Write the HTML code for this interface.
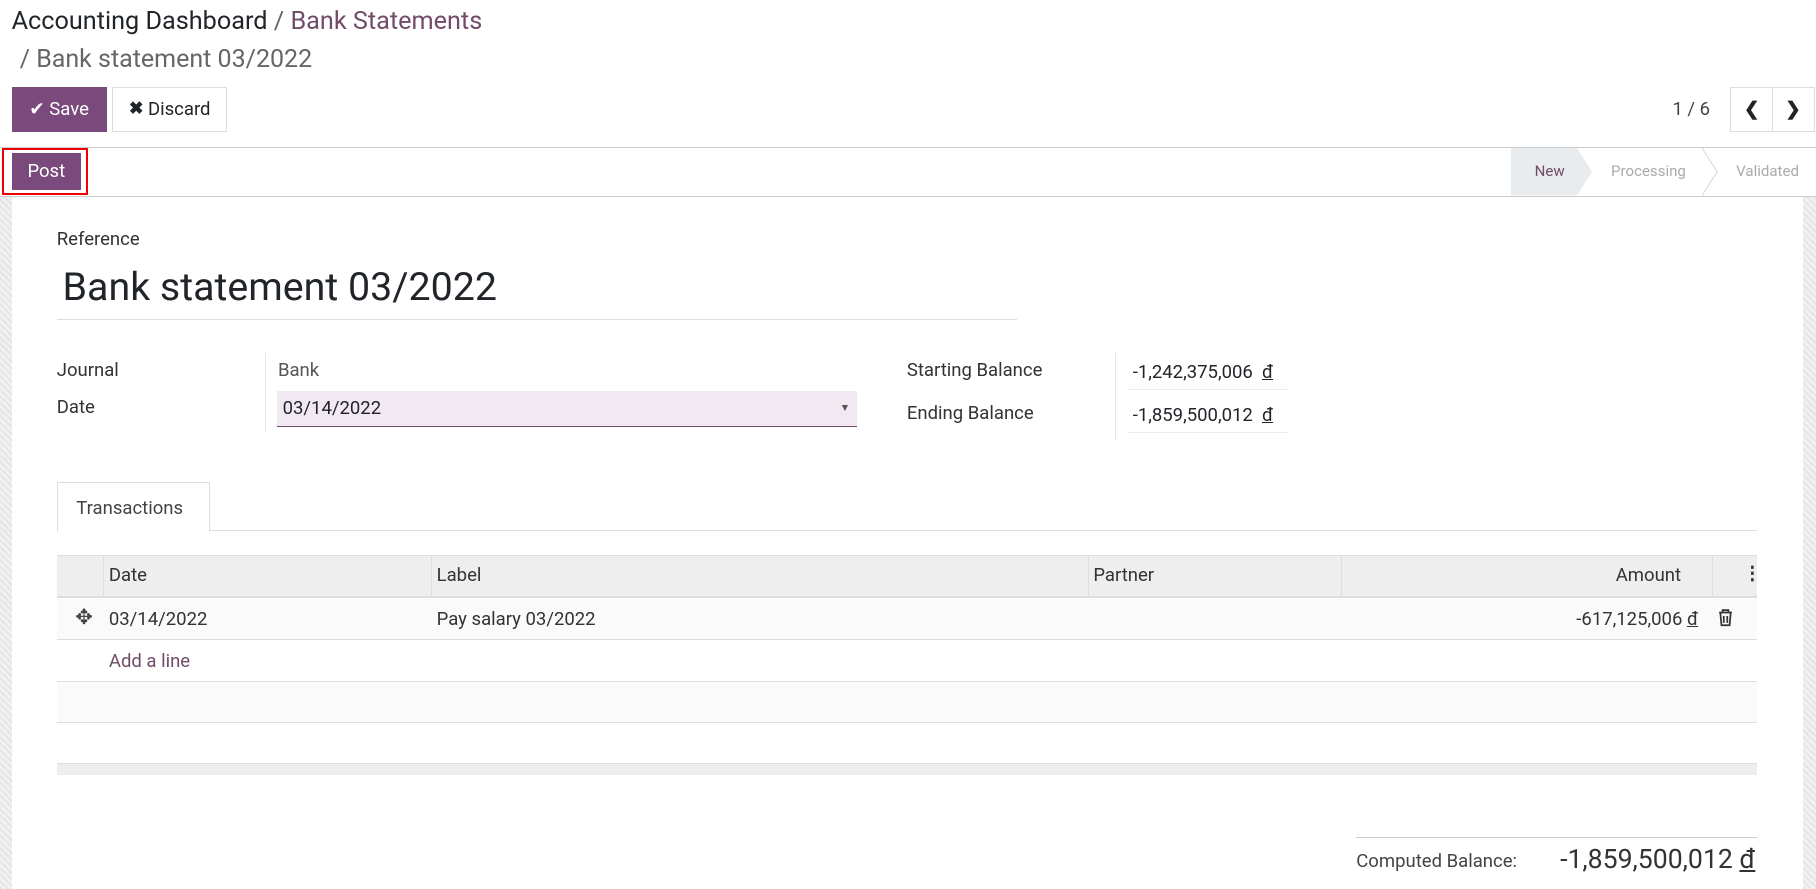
<!DOCTYPE html>
<html><head><meta charset="utf-8"><style>
*{box-sizing:border-box;margin:0;padding:0}
html,body{width:1816px;height:889px;overflow:hidden;background:#fff}
#w{zoom:1.1582;width:1568px;height:768px;position:relative;font-family:Roboto,"Liberation Sans",sans-serif;color:#4c4c4c;font-size:16px}
.a{position:absolute;white-space:nowrap}
.pur{color:#714B67}
.btn{position:absolute;display:flex;align-items:center;justify-content:center;font-size:16px}
.sheetedge{position:absolute;top:170px;bottom:0;width:10px;background:repeating-linear-gradient(45deg,#e6e6e6 0 2px,#f2f2f2 2px 4px)}
</style></head><body><div id="w">
<div class="a" style="left:10px;top:6px;font-size:21.8px;color:#212529">Accounting Dashboard <span style="color:#666">/</span> <span class="pur">Bank Statements</span></div>
<div class="a" style="left:17px;top:39px;font-size:21.6px;color:#666">/ Bank statement 03/2022</div>
<div class="btn" style="left:10px;top:75px;width:82px;height:39px;background:#7a4a7c;color:#fff">✔&nbsp;Save</div>
<div class="btn" style="left:97px;top:75px;width:99px;height:39px;border:1px solid #ddd;color:#212529"><b style="font-size:15px">✖</b>&nbsp;Discard</div>
<div class="a" style="left:1444px;top:85px;color:#444">1 / 6</div>
<div class="btn" style="left:1494px;top:75px;width:37px;height:39px;border:1px solid #ddd;color:#212529;font-weight:bold">❮</div>
<div class="btn" style="left:1530px;top:75px;width:37px;height:39px;border:1px solid #ddd;border-left:none;color:#212529;font-weight:bold">❯</div>
<div class="a" style="left:0;top:127px;width:1568px;height:43px;border-top:1px solid #ccc;border-bottom:1px solid #ccc"></div>
<div class="a" style="left:2px;top:128px;width:74px;height:40px;border:2px solid #e00"></div>
<div class="btn" style="left:10px;top:132px;width:60px;height:32px;background:#7a4a7c;color:#fff">Post</div>
<svg class="a" style="left:1305px;top:128px" width="263" height="41"><path d="M0 0H57L70 20.5 57 41H0Z" fill="#e9ecef"/><path d="M165 0L178 20.5 165 41" fill="none" stroke="#ddd"/></svg>
<div class="a" style="left:1325px;top:140px;font-size:13px;color:#714B67">New</div>
<div class="a" style="left:1391px;top:140px;font-size:13px;color:#aaa">Processing</div>
<div class="a" style="left:1499px;top:140px;font-size:13px;color:#aaa">Validated</div>
<div class="sheetedge" style="left:0"></div><div class="sheetedge" style="left:1557px;width:11px"></div>
<div class="a" style="left:49px;top:197px;color:#333">Reference</div>
<div class="a" style="left:54px;top:227px;font-size:34px;color:#212529">Bank statement 03/2022</div>
<div class="a" style="left:49px;top:275px;width:829px;border-top:1px solid #ddd"></div>
<div class="a" style="left:49px;top:310px;color:#333">Journal</div>
<div class="a" style="left:49px;top:342px;color:#333">Date</div>
<div class="a" style="left:229px;top:305px;height:68px;border-left:1px solid #e5e5e5"></div>
<div class="a" style="left:240px;top:310px;color:#555">Bank</div>
<div class="a" style="left:239px;top:338px;width:501px;height:31px;background:#f2e8f2;border-bottom:1px solid #714B67"></div>
<div class="a" style="left:244px;top:343px;color:#212529">03/14/2022</div>
<div class="a" style="left:725px;top:346px;font-size:9px;color:#555">▼</div>
<div class="a" style="left:783px;top:310px;color:#333">Starting Balance</div>
<div class="a" style="left:783px;top:347px;color:#333">Ending Balance</div>
<div class="a" style="left:963px;top:305px;height:75px;border-left:1px solid #e5e5e5"></div>
<div class="a" style="left:973px;top:309px;width:140px;height:28px;border-bottom:1px solid #eee;padding-left:5px;padding-top:3px;color:#212529">-1,242,375,006 &nbsp;<u>đ</u></div>
<div class="a" style="left:973px;top:346px;width:140px;height:28px;border-bottom:1px solid #eee;padding-left:5px;padding-top:3px;color:#212529">-1,859,500,012 &nbsp;<u>đ</u></div>
<div class="a" style="left:49px;top:458px;width:1468px;border-top:1px solid #ddd"></div>
<div class="a" style="left:49px;top:416px;width:132px;height:43px;border:1px solid #ddd;border-bottom:1px solid #fff;background:#fff;padding:12px 0 0 16px;color:#444">Transactions</div>
<div class="a" style="left:49px;top:479px;width:1468px;height:37px;background:#eee;border-top:1px solid #ddd;border-bottom:2px solid #ddd"></div>
<div class="a" style="left:89px;top:480px;height:35px;border-left:1px solid #ddd"></div>
<div class="a" style="left:372px;top:480px;height:35px;border-left:1px solid #ddd"></div>
<div class="a" style="left:939px;top:480px;height:35px;border-left:1px solid #ddd"></div>
<div class="a" style="left:1158px;top:480px;height:35px;border-left:1px solid #ddd"></div>
<div class="a" style="left:1478px;top:480px;height:35px;border-left:1px solid #ddd"></div>
<div class="a" style="left:94px;top:487px;color:#333">Date</div>
<div class="a" style="left:377px;top:487px;color:#333">Label</div>
<div class="a" style="left:944px;top:487px;color:#333">Partner</div>
<div class="a" style="left:1395px;top:487px;color:#333">Amount</div>
<div class="a" style="left:1505px;top:485px;color:#333;font-weight:bold">⋮</div>
<div class="a" style="left:49px;top:517px;width:1468px;height:36px;background:#fafafa;border-bottom:1px solid #ddd"></div>
<div class="a" style="left:65px;top:522px;font-size:18px;color:#444">✥</div>
<div class="a" style="left:94px;top:525px;color:#333">03/14/2022</div>
<div class="a" style="left:377px;top:525px;color:#333">Pay salary 03/2022</div>
<div class="a" style="left:1361px;top:525px;color:#333">-617,125,006 <u>đ</u></div>
<svg class="a" style="left:1483px;top:526px" width="13" height="15"><path d="M1 3H12M4 3V1H9V3M2 3L3 14H10L11 3M5 6V12M8 6V12" fill="none" stroke="#333" stroke-width="1.5"/></svg>
<div class="a" style="left:49px;top:553px;width:1468px;height:36px;border-bottom:1px solid #ddd"></div>
<div class="a pur" style="left:94px;top:561px">Add a line</div>
<div class="a" style="left:49px;top:589px;width:1468px;height:35px;border-bottom:1px solid #ddd;background:#fafafa"></div>
<div class="a" style="left:49px;top:659px;width:1468px;height:10px;background:#eee;border-top:1px solid #ddd"></div>
<div class="a" style="left:1171px;top:723px;width:346px;border-top:1px solid #ccc"></div>
<div class="a" style="left:1171px;top:734px;color:#444">Computed Balance:</div>
<div class="a" style="left:1347px;top:728px;font-size:23px;color:#333">-1,859,500,012 <u>đ</u></div>
</div></body></html>
